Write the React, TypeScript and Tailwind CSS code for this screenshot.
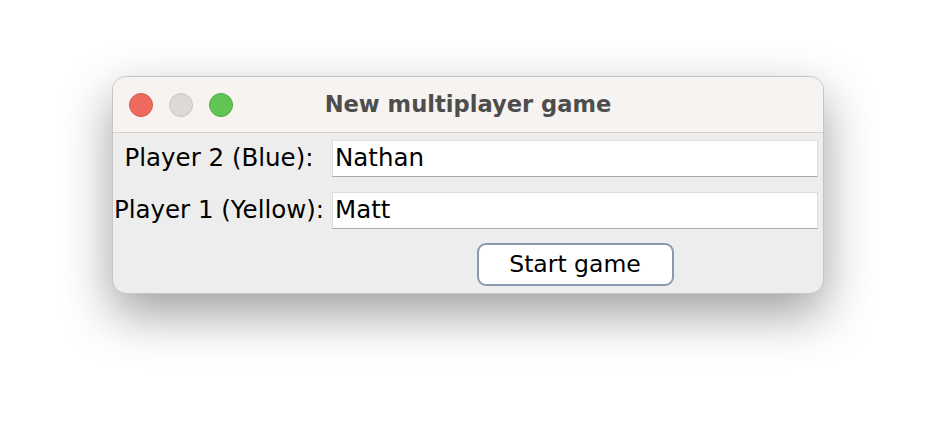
import React from 'react';

const App: React.FC = () => {
  return (
    <div className="w-[936px] h-[442px] bg-white pt-[76px] pl-[112px] font-['DejaVu_Sans',sans-serif]">
      {/* Window */}
      <div className="w-[712px] h-[218px] rounded-[14px] bg-[#ededed] border border-[#c4c4c4] shadow-[0_20px_50px_rgba(0,0,0,0.38)] overflow-hidden flex flex-col">
        {/* Title bar */}
        <div className="h-[56px] bg-[#f7f3f1] border-b border-[#d4d0ce] flex items-center relative shrink-0">
          <div className="flex items-center gap-[16px] pl-[16px]">
            <span className="w-[24px] h-[24px] rounded-full bg-[#ee6a5e] border border-[#d5584d]" />
            <span className="w-[24px] h-[24px] rounded-full bg-[#ddd9d6] border border-[#c9c5c2]" />
            <span className="w-[24px] h-[24px] rounded-full bg-[#61c554] border border-[#50ad44]" />
          </div>
          <div className="absolute inset-0 flex items-center justify-center pointer-events-none">
            <span className="text-[22.6px] font-bold text-[#4d4d4d]">New multiplayer game</span>
          </div>
        </div>

        {/* Form */}
        <div className="grid grid-cols-[212px_486px] gap-x-[7px] gap-y-[15px] pt-[7px] text-[24.5px] text-black leading-none">
          <div className="flex items-center justify-center h-[37px]">Player 2 (Blue):</div>
          <div className="h-[37px] bg-white border border-[#dcdcdc] border-b-[#aaaaaa] flex items-center px-[2px]">Nathan</div>
          <div className="flex items-center justify-center h-[37px] whitespace-nowrap">Player 1 (Yellow):</div>
          <div className="h-[37px] bg-white border border-[#dcdcdc] border-b-[#aaaaaa] flex items-center px-[2px]">Matt</div>
          <div />
          <div className="flex justify-center -mt-[1px]">
            <button className="w-[197px] h-[43px] bg-white rounded-[9px] border-[2px] border-[#8a99ae] text-[23.5px] text-black flex items-center justify-center leading-none">
              Start game
            </button>
          </div>
        </div>
      </div>
    </div>
  );
};

export default App;
